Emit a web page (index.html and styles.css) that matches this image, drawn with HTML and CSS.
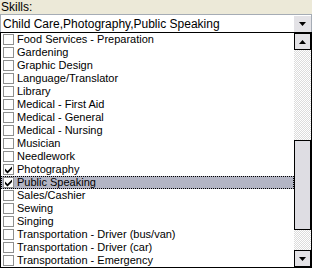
FILE: index.html
```html
<!DOCTYPE html>
<html>
<head lang="en">
    <meta charset="UTF-8">
    <title>Skills</title>
    <link rel="stylesheet" href="styles.css">
</head>
<body>
    <div id="field">
        <div id="label">Skills:</div>
        <div id="combo">
            <span id="combo-txt">Child Care,Photography,Public Speaking</span>
            <span id="combo-btn">
                <svg width="7" height="4" viewBox="0 0 7 4"><path d="M0 0H7L3.5 4Z" fill="#000"/></svg>
            </span>
        </div>
        <div id="list">
            <ul id="items">
                <li><span class="box"></span>Food Services - Preparation</li>
                <li><span class="box"></span>Gardening</li>
                <li><span class="box"></span>Graphic Design</li>
                <li><span class="box"></span>Language/Translator</li>
                <li><span class="box"></span>Library</li>
                <li><span class="box"></span>Medical - First Aid</li>
                <li><span class="box"></span>Medical - General</li>
                <li><span class="box"></span>Medical - Nursing</li>
                <li><span class="box"></span>Musician</li>
                <li><span class="box"></span>Needlework</li>
                <li><span class="box"><svg width="9" height="9" viewBox="0 0 9 9"><path d="M1 3.5L3.5 6L8 1.5V4L3.5 8.5L1 6Z" fill="#000"/></svg></span>Photography</li>
                <li class="selected"><span class="box"><svg width="9" height="9" viewBox="0 0 9 9"><path d="M1 3.5L3.5 6L8 1.5V4L3.5 8.5L1 6Z" fill="#000"/></svg></span>Public Speaking</li>
                <li><span class="box"></span>Sales/Cashier</li>
                <li><span class="box"></span>Sewing</li>
                <li><span class="box"></span>Singing</li>
                <li><span class="box"></span>Transportation - Driver (bus/van)</li>
                <li><span class="box"></span>Transportation - Driver (car)</li>
                <li><span class="box"></span>Transportation - Emergency</li>
            </ul>
            <div id="scroll">
                <div class="arrow">
                    <svg width="7" height="4" viewBox="0 0 7 4"><path d="M0 4H7L3.5 0Z" fill="#000"/></svg>
                </div>
                <div class="track track-top"></div>
                <div id="thumb"></div>
                <div class="track"></div>
                <div class="arrow">
                    <svg width="7" height="4" viewBox="0 0 7 4"><path d="M0 0H7L3.5 4Z" fill="#000"/></svg>
                </div>
            </div>
        </div>
    </div>
</body>
</html>
```

FILE: styles.css
```css
*{
    margin: 0;
    padding: 0;
    box-sizing: border-box;
}
ul{
    list-style: none;
}
body{
    background: #ece9d8;
    font-family: "Liberation Sans", Arial, sans-serif;
    font-size: 11px;
    color: #000;
}
#field{
    width: 312px;
    height: 268px;
    display: flex;
    flex-direction: column;
}
#label{
    height: 14px;
    line-height: 14px;
    padding-left: 1px;
    font-size: 12px;
}
#combo{
    height: 18px;
    background: #fff;
    border: 1px solid #a5acb5;
    border-bottom: none;
    display: flex;
    align-items: center;
    justify-content: space-between;
    font-size: 12px;
}
#combo-txt{
    padding-left: 2px;
    line-height: 16px;
}
#combo-btn{
    width: 17px;
    height: 16px;
    background: #e3e2e6;
    display: flex;
    align-items: center;
    justify-content: center;
}
#list{
    height: 236px;
    background: #fff;
    border: 1px solid #000;
    display: flex;
}
#items{
    width: 293px;
}
#items li{
    height: 13px;
    line-height: 13px;
    display: flex;
    align-items: center;
    white-space: nowrap;
}
#items li.selected{
    background: #b3b5c4;
    outline: 1px dotted #000;
    outline-offset: -1px;
}
.box{
    width: 11px;
    height: 11px;
    margin: 0 3px 0 2px;
    border: 1px solid #8e8f8f;
    background: #fff;
    display: flex;
    align-items: center;
    justify-content: center;
}
#scroll{
    width: 17px;
    display: flex;
    flex-direction: column;
}
.arrow{
    height: 17px;
    background: #e3e2e6;
    border: 1px solid #000;
    display: flex;
    align-items: center;
    justify-content: center;
}
.track{
    flex: 1;
    background: repeating-conic-gradient(#dcdcdc 0 25%, #fff 0 50%) 0 0/2px 2px;
}
.track-top{
    flex: 0 0 90px;
}
#thumb{
    height: 90px;
    background: #dedde3;
    border: 1px solid #000;
}
```
